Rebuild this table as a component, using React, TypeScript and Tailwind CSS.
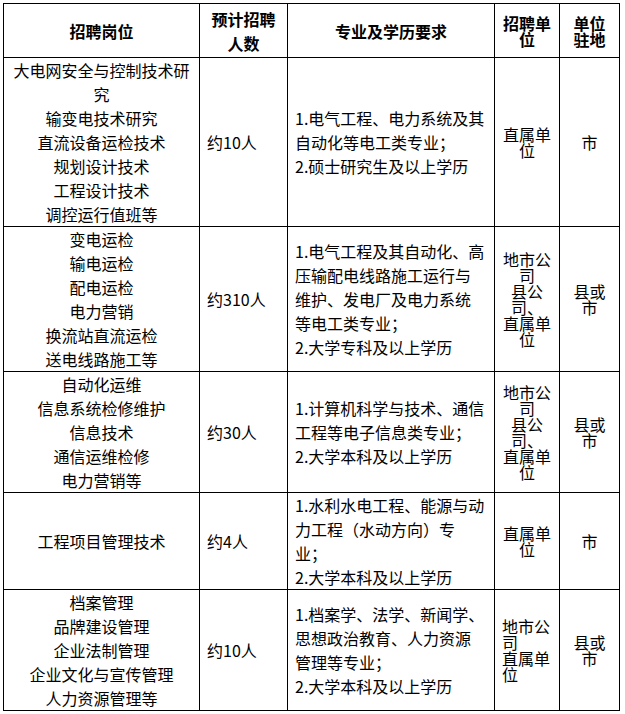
const font = { fontFamily: '"Noto Sans CJK SC", "Noto Sans", sans-serif' }

interface Row {
  posts: string[]
  count: string
  reqs: string[]
  units: string[]
  unitsLeft?: boolean
  place: string[]
}

const rows: Row[] = [
  {
    posts: ["大电网安全与控制技术研", "究", "输变电技术研究", "直流设备运检技术", "规划设计技术", "工程设计技术", "调控运行值班等"],
    count: "约10人",
    reqs: ["1.电气工程、电力系统及其", "自动化等电工类专业；", "2.硕士研究生及以上学历"],
    units: ["直属单", "位"],
    place: ["市"],
  },
  {
    posts: ["变电运检", "输电运检", "配电运检", "电力营销", "换流站直流运检", "送电线路施工等"],
    count: "约310人",
    reqs: ["1.电气工程及其自动化、高", "压输配电线路施工运行与", "维护、发电厂及电力系统", "等电工类专业；", "2.大学专科及以上学历"],
    units: ["地市公", "司", "县公", "司、", "直属单", "位"],
    place: ["县或", "市"],
  },
  {
    posts: ["自动化运维", "信息系统检修维护", "信息技术", "通信运维检修", "电力营销等"],
    count: "约30人",
    reqs: ["1.计算机科学与技术、通信", "工程等电子信息类专业；", "2.大学本科及以上学历"],
    units: ["地市公", "司", "县公", "司、", "直属单", "位"],
    place: ["县或", "市"],
  },
  {
    posts: ["工程项目管理技术"],
    count: "约4人",
    reqs: ["1.水利水电工程、能源与动", "力工程（水动方向）专", "业；", "2.大学本科及以上学历"],
    units: ["直属单", "位"],
    place: ["市"],
  },
  {
    posts: ["档案管理", "品牌建设管理", "企业法制管理", "企业文化与宣传管理", "人力资源管理等"],
    count: "约10人",
    reqs: ["1.档案学、法学、新闻学、", "思想政治教育、人力资源", "管理等专业；", "2.大学本科及以上学历"],
    units: ["地市公", "司", "直属单", "位"],
    unitsLeft: true,
    place: ["县或", "市"],
  },
]

const Lines = ({ items }: { items: string[] }) => (
  <div>
    {items.map((t, i) => (
      <div key={i} className="whitespace-nowrap">
        {t}
      </div>
    ))}
  </div>
)

const cell = "border-r border-b border-black flex items-center"

export default function App() {
  return (
    <div className="min-h-screen bg-white pt-[3px] pl-[3px] text-black text-[16px]" style={font}>
      <div className="grid w-[617px] grid-cols-[196px_88px_207px_65px_60px] border-l border-t border-black">
        {/* header */}
        <div className={`${cell} h-[54px] justify-center font-bold leading-6`}>招聘岗位</div>
        <div className={`${cell} h-[54px] justify-center text-center font-bold leading-6`}>
          <Lines items={["预计招聘", "人数"]} />
        </div>
        <div className={`${cell} h-[54px] justify-center font-bold leading-6`}>专业及学历要求</div>
        <div className={`${cell} h-[54px] justify-center text-center font-bold leading-4`}>
          <Lines items={["招聘单", "位"]} />
        </div>
        <div className={`${cell} h-[54px] justify-center text-center font-bold leading-4`}>
          <Lines items={["单位", "驻地"]} />
        </div>

        {rows.map((r, i) => (
          <div key={i} className="contents">
            <div className={`${cell} justify-center text-center leading-6`}>
              <Lines items={r.posts} />
            </div>
            <div className={`${cell} pl-[7px] leading-6`}>{r.count}</div>
            <div className={`${cell} pl-[7px] leading-6`}>
              <Lines items={r.reqs} />
            </div>
            <div className={`${cell} leading-4 ${r.unitsLeft ? "pl-[7px] text-left" : "justify-center text-center"}`}>
              <Lines items={r.units} />
            </div>
            <div className={`${cell} justify-center text-center leading-4`}>
              <Lines items={r.place} />
            </div>
          </div>
        ))}
      </div>
    </div>
  )
}
